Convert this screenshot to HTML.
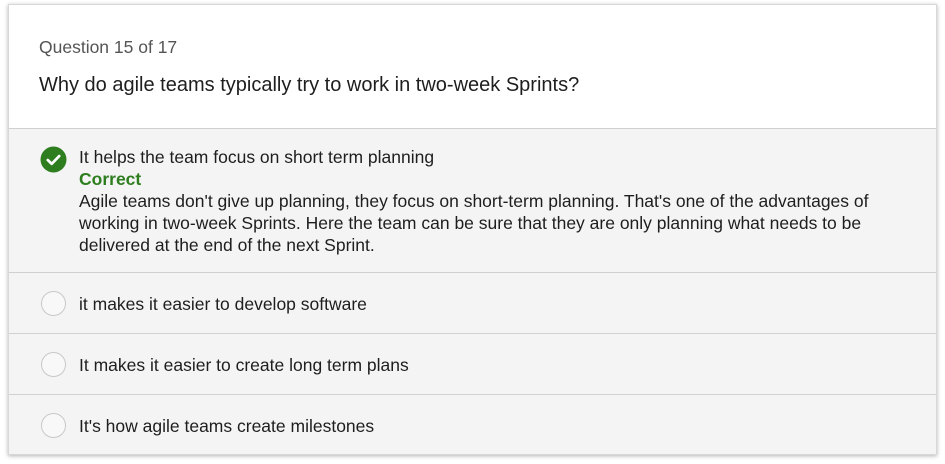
<!DOCTYPE html>
<html><head><style>
html,body{margin:0;padding:0;background:#fff;width:945px;height:464px;overflow:hidden}
body{font-family:"Liberation Sans",sans-serif;color:#1e1e1e}
.card{position:absolute;left:8px;top:4px;width:929px;height:451px;background:#f4f4f4;box-shadow:0 1px 4px rgba(0,0,0,.3);border:1px solid #d8d8d8;box-sizing:border-box}
.head{position:absolute;left:0;top:0;width:100%;height:123px;background:#fff;border-bottom:1px solid #d0d0d0}
.qn{position:absolute;left:30px;top:32px;font-size:17.5px;color:#555}
.qt{position:absolute;left:30px;top:69px;font-size:20px;color:#1e1e1e}
.row{position:absolute;left:0;width:100%;border-bottom:1px solid #d0d0d0}
.txt{position:absolute;left:70px;font-size:17.5px;line-height:22px;white-space:nowrap}
.circ{position:absolute;left:32px;width:25px;height:25px;border:1.5px solid #c8c8c8;border-radius:50%;box-sizing:border-box;background:#f8f8f8}
</style></head><body>
<div class="card">
<div class="head"><div class="qn">Question 15 of 17</div><div class="qt">Why do agile teams typically try to work in two-week Sprints?</div></div>
<div class="row" style="top:123px;height:144px">
<svg style="position:absolute;left:31px;top:18px" width="27" height="27" viewBox="0 0 26 26"><circle cx="13" cy="13" r="12.5" fill="#2e7d1e"/><path d="M7.5 13.5l3.8 3.7 7.2-7.5" stroke="#fff" stroke-width="2.6" fill="none" stroke-linecap="round" stroke-linejoin="round"/></svg>
<div class="txt" style="top:18px">It helps the team focus on short term planning<br><b style="color:#2e7d1e">Correct</b><br>Agile teams don't give up planning, they focus on short-term planning. That's one of the advantages of<br>working in two-week Sprints. Here the team can be sure that they are only planning what needs to be<br>delivered at the end of the next Sprint.</div>
</div>
<div class="row" style="top:268px;height:60px"><div class="circ" style="top:18px"></div><div class="txt" style="top:20px">it makes it easier to develop software</div></div>
<div class="row" style="top:329px;height:60px"><div class="circ" style="top:18px"></div><div class="txt" style="top:20px">It makes it easier to create long term plans</div></div>
<div class="row" style="top:390px;height:60px;border:0"><div class="circ" style="top:18px"></div><div class="txt" style="top:20px">It's how agile teams create milestones</div></div>
</div>
</body></html>
